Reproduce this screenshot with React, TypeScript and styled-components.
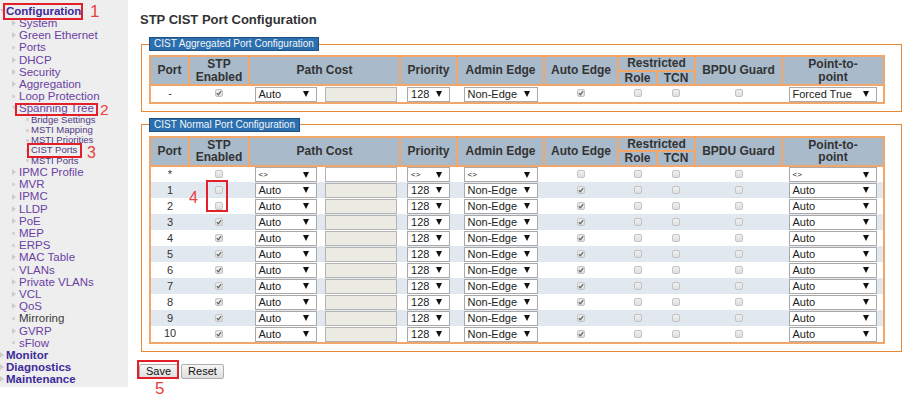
import React from 'react';
import styled, { createGlobalStyle, css } from 'styled-components';

const GlobalStyle = createGlobalStyle`
  html, body { margin: 0; padding: 0; background: #fff; }
  body { font-family: "Liberation Sans", Arial, Helvetica, sans-serif; }
  * { box-sizing: border-box; }
`;

type BulletKind = 'tri' | 'down' | 'sq';
type Tone = 'bold' | 'link' | 'sub' | 'plain';
type Level = 0 | 1 | 2;

const Page = styled.div`
  position: relative;
  display: flex;
  align-items: flex-start;
  width: 909px;
  height: 398px;
  overflow: hidden;
`;

const NavPanel = styled.nav`
  flex: none;
  width: 128px;
  background: #eeeeee;
  padding: 4.9px 0 2px;
`;

const toneColor: Record<Tone, string> = {
  bold: '#3d2a9a',
  link: '#6b3fa3',
  sub: '#4f3a83',
  plain: '#3a3a3a',
};

const NavItem = styled.div<{ $level: Level; $tone: Tone }>`
  display: flex;
  align-items: center;
  white-space: nowrap;
  height: ${(p) => (p.$level === 2 ? '10.3px' : '12.2px')};
  line-height: ${(p) => (p.$level === 2 ? '10.3px' : '12.2px')};
  padding-left: ${(p) => [0, 12, 26][p.$level]}px;
  font-size: ${(p) => (p.$level === 2 ? '9.5px' : '11.5px')};
  font-weight: ${(p) => (p.$tone === 'bold' ? 700 : 400)};
  color: ${(p) => toneColor[p.$tone]};
`;

const BulletBox = styled.span<{ $level: Level }>`
  flex: none;
  display: flex;
  align-items: center;
  width: ${(p) => [6, 7, 5][p.$level]}px;
  height: 100%;
`;

const BulletShape = styled.span<{ $kind: BulletKind }>`
  display: block;
  ${(p) =>
    p.$kind === 'tri'
      ? css`
          width: 0;
          height: 0;
          border-top: 3px solid transparent;
          border-bottom: 3px solid transparent;
          border-left: 4px solid #cbcbcb;
        `
      : p.$kind === 'down'
      ? css`
          width: 0;
          height: 0;
          border-left: 3px solid transparent;
          border-right: 3px solid transparent;
          border-top: 4px solid #cbcbcb;
        `
      : css`
          width: 3px;
          height: 3px;
          background: #d4d4d4;
        `}
`;

const Main = styled.main`
  flex: 1;
  display: flex;
  flex-direction: column;
  align-items: flex-start;
  padding: 12px 0 0 13px;
`;

const Title = styled.h1`
  margin: 0;
  font-size: 13px;
  line-height: 16px;
  font-weight: 700;
  color: #333;
  margin-left: -1px;
`;

const Fieldset = styled.fieldset<{ $gap: number }>`
  margin: ${(p) => p.$gap}px 0 0 0;
  width: 761px;
  min-width: 0;
  padding: 4px 18px 7px 7px;
  border: 1px solid #e8893a;
`;

const Legend = styled.legend`
  padding: 0 4px;
  margin: 0;
  height: 14px;
  line-height: 12px;
  font-size: 10px;
  color: #f2f6fa;
  background: #2b6fae;
  border: 1px solid #1c4f82;
`;

const Table = styled.table`
  width: 734px;
  table-layout: fixed;
  border-collapse: collapse;
  border: 2px solid #f2a66a;
`;

const HeadRow = styled.tr`
  height: 12px;
`;

const Th = styled.th`
  background: #a9bacb;
  border: 2px solid #f2a66a;
  font-size: 12px;
  font-weight: 700;
  color: #333;
  line-height: 12.5px;
  padding: 0 2px;
  text-align: center;
  vertical-align: middle;
`;

const Row = styled.tr<{ $alt: boolean }>`
  height: 16px;
  background: ${(p) => (p.$alt ? '#e1e8f0' : '#ffffff')};
`;

const Td = styled.td`
  padding: 0;
  height: 16px;
  text-align: center;
  vertical-align: middle;
  font-size: 11px;
  line-height: 15px;
  color: #333;
`;

const SelectBox = styled.span<{ $w: number }>`
  display: inline-flex;
  align-items: center;
  justify-content: space-between;
  width: ${(p) => p.$w}px;
  height: 15px;
  border: 1px solid #a9a9a9;
  background: #fff;
  padding: 0 7px 0 3px;
  color: #222;
  vertical-align: middle;
  text-align: left;
`;

const SelText = styled.span<{ $small: boolean }>`
  font-size: ${(p) => (p.$small ? '8px' : '11px')};
  line-height: 13px;
`;

const Arrow = styled.span`
  flex: none;
  width: 0;
  height: 0;
  border-left: 3.5px solid transparent;
  border-right: 3.5px solid transparent;
  border-top: 6px solid #111;
`;

const CostInput = styled.input<{ $enabled: boolean }>`
  display: inline-block;
  width: 72px;
  height: 15px;
  margin: 0;
  padding: 0;
  border: 1px solid #b4b4b4;
  background: ${(p) => (p.$enabled ? '#ffffff' : '#ebebe4')};
  vertical-align: middle;
  outline: none;
`;

const Check = styled.span`
  display: inline-flex;
  align-items: center;
  justify-content: center;
  width: 8px;
  height: 8px;
  border: 1px solid #c3c3c3;
  border-radius: 2px;
  background: linear-gradient(#f0f0f0, #e0e0e0);
  vertical-align: middle;
  margin-top: -2px;
`;

const ButtonRow = styled.div`
  display: flex;
  gap: 3px;
  margin: 12px 0 0 -2px;
`;

const Btn = styled.button`
  height: 15px;
  padding: 0 6px;
  font-family: "Liberation Sans", Arial, sans-serif;
  font-size: 11px;
  line-height: 13px;
  color: #111;
  border: 1px solid #aeaeae;
  border-radius: 2px;
  background: linear-gradient(#f7f7f7, #dddddd);
`;

const Mark = styled.div<{ $x: number; $y: number; $w: number; $h: number }>`
  position: absolute;
  left: ${(p) => p.$x}px;
  top: ${(p) => p.$y}px;
  width: ${(p) => p.$w}px;
  height: ${(p) => p.$h}px;
  border: 2px solid #e3202a;
  pointer-events: none;
`;

const Num = styled.div<{ $x: number; $y: number; $size: number }>`
  position: absolute;
  left: ${(p) => p.$x}px;
  top: ${(p) => p.$y}px;
  font-size: ${(p) => p.$size}px;
  line-height: 1;
  color: #e8403f;
  pointer-events: none;
`;

const navItems: [string, Level, BulletKind, Tone][] = [
  ['Configuration', 0, 'down', 'bold'],
  ['System', 1, 'tri', 'link'],
  ['Green Ethernet', 1, 'tri', 'link'],
  ['Ports', 1, 'sq', 'link'],
  ['DHCP', 1, 'tri', 'link'],
  ['Security', 1, 'tri', 'link'],
  ['Aggregation', 1, 'tri', 'link'],
  ['Loop Protection', 1, 'sq', 'link'],
  ['Spanning Tree', 1, 'down', 'link'],
  ['Bridge Settings', 2, 'sq', 'sub'],
  ['MSTI Mapping', 2, 'sq', 'sub'],
  ['MSTI Priorities', 2, 'sq', 'sub'],
  ['CIST Ports', 2, 'sq', 'sub'],
  ['MSTI Ports', 2, 'sq', 'sub'],
  ['IPMC Profile', 1, 'tri', 'link'],
  ['MVR', 1, 'sq', 'link'],
  ['IPMC', 1, 'tri', 'link'],
  ['LLDP', 1, 'tri', 'link'],
  ['PoE', 1, 'tri', 'link'],
  ['MEP', 1, 'sq', 'link'],
  ['ERPS', 1, 'sq', 'link'],
  ['MAC Table', 1, 'tri', 'link'],
  ['VLANs', 1, 'sq', 'link'],
  ['Private VLANs', 1, 'tri', 'link'],
  ['VCL', 1, 'tri', 'link'],
  ['QoS', 1, 'tri', 'link'],
  ['Mirroring', 1, 'sq', 'plain'],
  ['GVRP', 1, 'tri', 'link'],
  ['sFlow', 1, 'sq', 'link'],
  ['Monitor', 0, 'tri', 'bold'],
  ['Diagnostics', 0, 'tri', 'bold'],
  ['Maintenance', 0, 'tri', 'bold'],
];

interface PortRow {
  port: string;
  stp: boolean;
  pc: string;
  pcEnabled: boolean;
  prio: string;
  admin: string;
  autoEdge: boolean;
  role: boolean;
  tcn: boolean;
  bpdu: boolean;
  p2p: string;
}

const aggRows: PortRow[] = [
  { port: '-', stp: true, pc: 'Auto', pcEnabled: false, prio: '128', admin: 'Non-Edge', autoEdge: true, role: false, tcn: false, bpdu: false, p2p: 'Forced True' },
];

const normalRows: PortRow[] = [
  { port: '*', stp: false, pc: '<>', pcEnabled: true, prio: '<>', admin: '<>', autoEdge: false, role: false, tcn: false, bpdu: false, p2p: '<>' },
  ...Array.from({ length: 10 }, (_, i) => ({
    port: String(i + 1),
    stp: i + 1 >= 3,
    pc: 'Auto',
    pcEnabled: false,
    prio: '128',
    admin: 'Non-Edge',
    autoEdge: true,
    role: false,
    tcn: false,
    bpdu: false,
    p2p: 'Auto',
  })),
];

const CheckBox = ({ checked }: { checked: boolean }) => (
  <Check>
    {checked && (
      <svg width="6" height="6" viewBox="0 0 6 6">
        <path d="M0.8 3.2 L2.4 4.7 L5.2 1.2" stroke="#6a6a6a" strokeWidth="1.3" fill="none" />
      </svg>
    )}
  </Check>
);

const Select = ({ value, width }: { value: string; width: number }) => (
  <SelectBox $w={width}>
    <SelText $small={value === '<>'}>{value}</SelText>
    <Arrow />
  </SelectBox>
);

const colWidths = [39, 60, 73, 78, 57, 87, 74, 39, 38, 87, 102];

const PortTable = ({ rows, zebra }: { rows: PortRow[]; zebra: boolean }) => (
  <Table>
    <colgroup>
      {colWidths.map((w, i) => (
        <col key={i} style={{ width: w }} />
      ))}
    </colgroup>
    <thead>
      <HeadRow>
        <Th rowSpan={2}>Port</Th>
        <Th rowSpan={2}>
          STP
          <br />
          Enabled
        </Th>
        <Th rowSpan={2} colSpan={2}>
          Path Cost
        </Th>
        <Th rowSpan={2}>Priority</Th>
        <Th rowSpan={2}>Admin Edge</Th>
        <Th rowSpan={2}>Auto Edge</Th>
        <Th colSpan={2}>Restricted</Th>
        <Th rowSpan={2}>BPDU Guard</Th>
        <Th rowSpan={2}>
          Point-to-
          <br />
          point
        </Th>
      </HeadRow>
      <HeadRow>
        <Th>Role</Th>
        <Th>TCN</Th>
      </HeadRow>
    </thead>
    <tbody>
      {rows.map((r, i) => (
        <Row key={r.port} $alt={zebra && i % 2 === 1}>
          <Td>{r.port}</Td>
          <Td>
            <CheckBox checked={r.stp} />
          </Td>
          <Td>
            <Select value={r.pc} width={62} />
          </Td>
          <Td>
            <CostInput $enabled={r.pcEnabled} readOnly defaultValue="" />
          </Td>
          <Td>
            <Select value={r.prio} width={43} />
          </Td>
          <Td>
            <Select value={r.admin} width={74} />
          </Td>
          <Td>
            <CheckBox checked={r.autoEdge} />
          </Td>
          <Td>
            <CheckBox checked={r.role} />
          </Td>
          <Td>
            <CheckBox checked={r.tcn} />
          </Td>
          <Td>
            <CheckBox checked={r.bpdu} />
          </Td>
          <Td>
            <Select value={r.p2p} width={88} />
          </Td>
        </Row>
      ))}
    </tbody>
  </Table>
);

export default function App() {
  return (
    <Page>
      <GlobalStyle />
      <NavPanel>
        {navItems.map(([label, level, bullet, tone]) => (
          <NavItem key={label} $level={level} $tone={tone}>
            <BulletBox $level={level}>
              <BulletShape $kind={bullet} />
            </BulletBox>
            {label}
          </NavItem>
        ))}
      </NavPanel>
      <Main>
        <Title>STP CIST Port Configuration</Title>
        <Fieldset $gap={9}>
          <Legend>CIST Aggregated Port Configuration</Legend>
          <PortTable rows={aggRows} zebra={false} />
        </Fieldset>
        <Fieldset $gap={6}>
          <Legend>CIST Normal Port Configuration</Legend>
          <PortTable rows={normalRows} zebra />
        </Fieldset>
        <ButtonRow>
          <Btn type="button">Save</Btn>
          <Btn type="button">Reset</Btn>
        </ButtonRow>
      </Main>

      <Mark $x={3} $y={3} $w={80} $h={17} />
      <Num $x={90} $y={3} $size={17}>1</Num>
      <Mark $x={15} $y={103} $w={83} $h={13} />
      <Num $x={100} $y={102} $size={15.5}>2</Num>
      <Mark $x={27} $y={143} $w={55} $h={15} />
      <Num $x={87} $y={145} $size={16}>3</Num>
      <Mark $x={206} $y={180} $w={22} $h={32} />
      <Num $x={189} $y={190} $size={16}>4</Num>
      <Mark $x={137} $y={360} $w={42} $h={19} />
      <Num $x={155} $y={380} $size={17}>5</Num>
    </Page>
  );
}
